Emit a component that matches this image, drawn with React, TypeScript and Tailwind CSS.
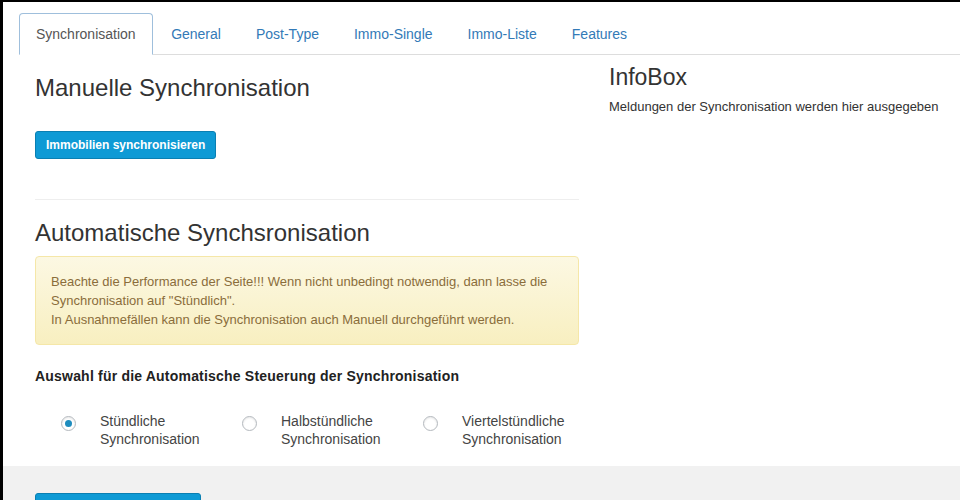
const tabs = ["Synchronisation", "General", "Post-Type", "Immo-Single", "Immo-Liste", "Features"];

const intervals = [
  { id: "hourly", label: "Stündliche", checked: true },
  { id: "half", label: "Halbstündliche", checked: false },
  { id: "quarter", label: "Viertelstündliche", checked: false },
];

function Radio({ checked }: { checked: boolean }) {
  return (
    <span className="mt-[3px] flex size-[15px] shrink-0 items-center justify-center rounded-full border border-[#b4b9be] bg-white shadow-[inset_0_1px_2px_rgba(0,0,0,0.1)]">
      {checked && <span className="size-[7px] rounded-full bg-[#1e8cbe]" />}
    </span>
  );
}

export default function App() {
  return (
    <div
      className="min-h-screen bg-black pl-[3px] pt-[2px] text-[#333]"
      style={{ fontFamily: '"Liberation Sans", Arial, sans-serif' }}
    >
      <div className="bg-white pb-[18px] pl-4 pt-[11px]">
        <ul className="flex border-b border-[#ddd]">
          {tabs.map((tab, i) => (
            <li key={tab} className="-mb-px mr-[2px]">
              <a
                href="#"
                className={
                  i === 0
                    ? "block rounded-t-[4px] border border-[#9fbfdc] border-b-transparent bg-white px-4 py-[10px] text-[14px] leading-5 text-[#555]"
                    : "block rounded-t-[4px] border border-transparent px-[15.5px] py-[10px] text-[14px] leading-5 text-[#337ab7]"
                }
              >
                {tab}
              </a>
            </li>
          ))}
        </ul>

        <div className="flex gap-[30px] pl-4">
          <div className="w-[544px] shrink-0">
            <h2 className="mt-[20px] text-[24px] leading-[1.1] font-normal">Manuelle Synchronisation</h2>
            <button
              type="button"
              className="mt-[30px] h-[28px] rounded-[3px] border border-[#0a7fb2] bg-[#0e9ad5] px-[10px] text-[12px] font-bold text-white"
            >
              Immobilien synchronisieren
            </button>
            <hr className="mt-[40px] border-[#eee]" />
            <h2 className="mt-[20px] text-[24px] leading-[1.1] font-normal">Automatische Synchsronisation</h2>
            <div className="mt-[9px] rounded-[4px] border border-[#f5e7a8] bg-gradient-to-b from-[#fcf8e3] to-[#f8efc0] px-[15px] py-[15px] text-[13px] leading-[19px] text-[#8a6d3b]">
              Beachte die Performance der Seite!!! Wenn nicht unbedingt notwendig, dann lasse die Synchronisation auf "Stündlich".
              <br />
              In Ausnahmefällen kann die Synchronisation auch Manuell durchgeführt werden.
            </div>
            <p className="mt-[21px] text-[14px] leading-5 font-bold tracking-[0.2px] text-[#222]">
              Auswahl für die Automatische Steuerung der Synchronisation
            </p>
            <div className="mt-[26px] flex pl-[26px]">
              {intervals.map((item) => (
                <label key={item.id} className="flex w-[181px] shrink-0 gap-[24px] text-[14px] leading-[18px] text-[#444]">
                  <span className="pt-[1px]">
                    <Radio checked={item.checked} />
                  </span>
                  <span>
                    {item.label}
                    <br />
                    Synchronisation
                  </span>
                </label>
              ))}
            </div>
          </div>

          <div className="flex-1">
            <h3 className="mt-[10px] text-[23px] leading-[1.1] font-normal">InfoBox</h3>
            <p className="mt-[7px] text-[13px] leading-5">Meldungen der Synchronisation werden hier ausgegeben</p>
          </div>
        </div>
      </div>

      <div className="bg-[#f1f1f1] pl-8 pt-[27px] pb-6">
        <button
          type="button"
          className="h-[28px] w-[166px] overflow-hidden whitespace-nowrap rounded-[3px] border border-[#0a7fb2] bg-[#0e9ad5] px-[10px] text-[12px] font-bold text-white"
        >
          Änderungen übernehmen
        </button>
      </div>
    </div>
  );
}
